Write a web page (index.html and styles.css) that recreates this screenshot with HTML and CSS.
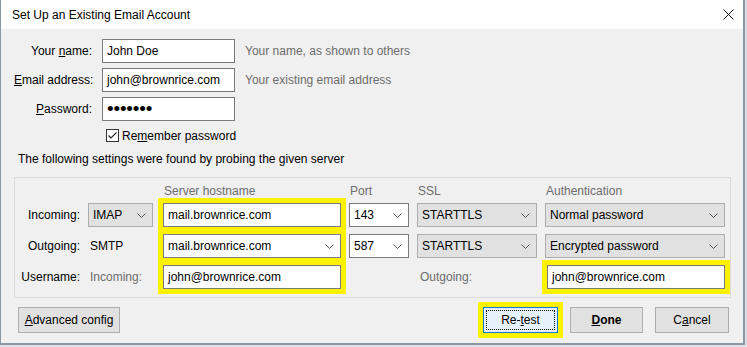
FILE: index.html
```html
<!DOCTYPE html>
<html lang="en">
<head>
    <meta charset="utf-8" />
    <title>Set Up an Existing Email Account</title>
    <link rel="stylesheet" href="styles.css">
</head>
<body>
<div class="dialog">
    <div class="titlebar">
        <span>Set Up an Existing Email Account</span>
        <svg class="close" width="11" height="11" viewBox="0 0 11 11">
            <path d="M0.5 0.5 L10.5 10.5 M10.5 0.5 L0.5 10.5" stroke="#111" stroke-width="1" fill="none"/>
        </svg>
    </div>

    <div class="content">
        <div class="account">
            <label class="lbl">Your <u>n</u>ame:</label>
            <div class="field">John Doe</div>
            <span class="hint">Your name, as shown to others</span>

            <label class="lbl"><u>E</u>mail address:</label>
            <div class="field">john@brownrice.com</div>
            <span class="hint">Your existing email address</span>

            <label class="lbl"><u>P</u>assword:</label>
            <div class="field"><span class="dots">&bull;&bull;&bull;&bull;&bull;&bull;&bull;</span></div>
            <span></span>
        </div>

        <div class="remember">
            <span class="check">
                <svg width="11" height="11" viewBox="0 0 11 11">
                    <path d="M1.5 5.5 L4 8 L9.5 2.5" stroke="#222" stroke-width="1.1" fill="none"/>
                </svg>
            </span>
            <span>Re<u>m</u>ember password</span>
        </div>

        <p class="found">The following settings were found by probing the given server</p>

        <div class="servers">
            <span></span>
            <span></span>
            <span class="head">Server hostname</span>
            <span class="head">Port</span>
            <span class="head">SSL</span>
            <span class="head">Authentication</span>

            <span class="lbl">Incoming:</span>
            <div class="select gray narrow">IMAP<svg class="chev" width="9" height="5" viewBox="0 0 9 5"><polyline points="0.5,0.5 4.5,4.5 8.5,0.5" fill="none" stroke="#555"/></svg></div>
            <div class="field mark">mail.brownrice.com</div>
            <div class="select">143<svg class="chev" width="9" height="5" viewBox="0 0 9 5"><polyline points="0.5,0.5 4.5,4.5 8.5,0.5" fill="none" stroke="#555"/></svg></div>
            <div class="select gray">STARTTLS<svg class="chev" width="9" height="5" viewBox="0 0 9 5"><polyline points="0.5,0.5 4.5,4.5 8.5,0.5" fill="none" stroke="#555"/></svg></div>
            <div class="select gray">Normal password<svg class="chev" width="9" height="5" viewBox="0 0 9 5"><polyline points="0.5,0.5 4.5,4.5 8.5,0.5" fill="none" stroke="#555"/></svg></div>

            <span class="lbl">Outgoing:</span>
            <span class="plain">SMTP</span>
            <div class="select mark">mail.brownrice.com<svg class="chev" width="9" height="5" viewBox="0 0 9 5"><polyline points="0.5,0.5 4.5,4.5 8.5,0.5" fill="none" stroke="#555"/></svg></div>
            <div class="select">587<svg class="chev" width="9" height="5" viewBox="0 0 9 5"><polyline points="0.5,0.5 4.5,4.5 8.5,0.5" fill="none" stroke="#555"/></svg></div>
            <div class="select gray">STARTTLS<svg class="chev" width="9" height="5" viewBox="0 0 9 5"><polyline points="0.5,0.5 4.5,4.5 8.5,0.5" fill="none" stroke="#555"/></svg></div>
            <div class="select gray">Encrypted password<svg class="chev" width="9" height="5" viewBox="0 0 9 5"><polyline points="0.5,0.5 4.5,4.5 8.5,0.5" fill="none" stroke="#555"/></svg></div>

            <span class="lbl">Username:</span>
            <span class="plain dim">Incoming:</span>
            <div class="field mark">john@brownrice.com</div>
            <span></span>
            <span class="plain dim out">Outgoing:</span>
            <div class="field mark user-out">john@brownrice.com</div>
        </div>

        <div class="actions">
            <button class="btn advanced"><u>A</u>dvanced config</button>
            <span class="spacer"></span>
            <button class="btn retest mark"><span class="focus">Re-<u>t</u>est</span></button>
            <button class="btn done"><u>D</u>one</button>
            <button class="btn cancel">C<u>a</u>ncel</button>
        </div>
    </div>
</div>
</body>
</html>
```

FILE: styles.css
```css
body {
    margin: 0;
    background: #dfe2e7;
    font-family: "Liberation Sans", Arial, sans-serif;
    font-size: 12px;
    color: #000;
}

.dialog {
    box-sizing: border-box;
    width: 745px;
    height: 345px;
    background: #f0f0f0;
    border-left: 1px solid #8d96a3;
    border-right: 2px solid #8d96a3;
    border-bottom: 2px solid #8d96a3;
}

.titlebar {
    height: 29px;
    background: #fff;
    display: flex;
    align-items: center;
    justify-content: space-between;
    padding: 0 9px 0 11px;
}
.close {
    display: block;
}

.content {
    padding: 10px 12px 0 13px;
}

u {
    text-decoration: underline;
    text-underline-offset: 1px;
}

/* top form */
.account {
    display: grid;
    grid-template-columns: 78px 133px auto;
    grid-auto-rows: 24px;
    column-gap: 10px;
    row-gap: 5px;
    align-items: center;
}
.lbl {
    text-align: right;
    white-space: nowrap;
}
.hint {
    color: #6d6d6d;
}

.field,
.select {
    box-sizing: border-box;
    height: 24px;
    background: #fff;
    border: 1px solid #7a7a7a;
    padding-left: 4px;
    display: flex;
    align-items: center;
    white-space: nowrap;
}
.dots {
    font-size: 19px;
    line-height: 1;
    letter-spacing: -0.2px;
    margin-top: -2px;
}

.remember {
    margin: 6px 0 0 92px;
    height: 17px;
    display: flex;
    align-items: center;
    gap: 3px;
}
.check {
    box-sizing: border-box;
    width: 13px;
    height: 13px;
    border: 1px solid #333;
    background: #fff;
    display: flex;
}

.found {
    margin: 7px 0 0 4px;
    line-height: 16px;
}

/* server settings box */
.servers {
    margin-top: 10px;
    border: 1px solid #dadada;
    padding: 5px 5px 8px 0;
    display: grid;
    grid-template-columns: 65px 67px 178px 60px 120px 180px;
    grid-template-rows: auto 24px 24px 24px;
    column-gap: 8px;
    row-gap: 7px;
    align-items: center;
}
.head {
    color: #6d6d6d;
    line-height: 16px;
    margin-bottom: -3px;
    align-self: start;
    padding-left: 1px;
}
.servers .lbl {
    text-align: right;
}
.plain {
    padding-left: 2px;
}
.dim {
    color: #6d6d6d;
}
.out {
    padding-left: 3px;
}

.select {
    justify-content: space-between;
    padding-right: 6px;
}
.select.gray {
    background: #e1e1e1;
    border-color: #adadad;
}
.select.narrow {
    width: 65px;
}
.chev {
    display: block;
    flex: none;
}
.user-out {
    margin-left: 2px;
}

.mark {
    outline: 5px solid #fff200;
}

/* buttons */
.actions {
    margin-top: 9px;
    display: flex;
    gap: 12px;
    padding: 0 2px 0 4px;
}
.spacer {
    flex: 1;
}
.btn {
    box-sizing: border-box;
    height: 26px;
    font: inherit;
    color: #000;
    background: #e1e1e1;
    border: 1px solid #adadad;
    padding: 0;
}
.advanced {
    width: 102px;
}
.retest {
    width: 75px;
    background: #e5f1fb;
    border-color: #0078d7;
    padding: 2px;
}
.focus {
    display: flex;
    align-items: center;
    justify-content: center;
    height: 100%;
    box-sizing: border-box;
    border: 1px dotted #000;
}
.done {
    width: 73px;
    font-weight: bold;
}
.cancel {
    width: 74px;
}
```
